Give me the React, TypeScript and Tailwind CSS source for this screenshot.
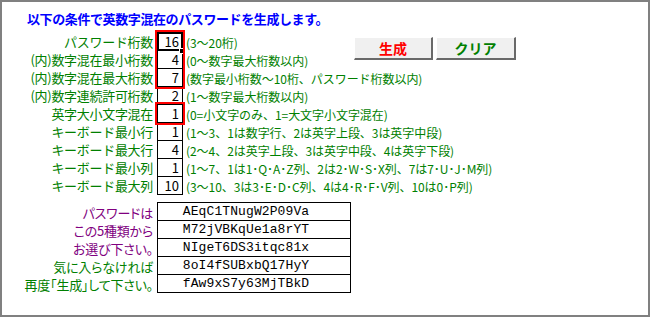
import React from 'react';

interface SettingRow {
  label: string;
  value: string;
  note: string;
}

const rows: SettingRow[] = [
  { label: 'パスワード桁数', value: '16', note: '(3〜20桁)' },
  { label: '(内)数字混在最小桁数', value: '4', note: '(0〜数字最大桁数以内)' },
  { label: '(内)数字混在最大桁数', value: '7', note: '(数字最小桁数〜10桁、パスワード桁数以内)' },
  { label: '(内)数字連続許可桁数', value: '2', note: '(1〜数字最大桁数以内)' },
  { label: '英字大小文字混在', value: '1', note: '(0=小文字のみ、1=大文字小文字混在)' },
  { label: 'キーボード最小行', value: '1', note: '(1〜3、1は数字行、2は英字上段、3は英字中段)' },
  { label: 'キーボード最大行', value: '4', note: '(2〜4、2は英字上段、3は英字中段、4は英字下段)' },
  { label: 'キーボード最小列', value: '1', note: '(1〜7、1は1･Q･A･Z列、2は2･W･S･X列、7は7･U･J･M列)' },
  { label: 'キーボード最大列', value: '10', note: '(3〜10、3は3･E･D･C列、4は4･R･F･V列、10は0･P列)' },
];

const results = [
  { hint: 'パスワードは', color: 'text-[#800080]', pw: 'AEqC1TNugW2P09Va' },
  { hint: 'この5種類から', color: 'text-[#800080]', pw: 'M72jVBKqUe1a8rYT' },
  { hint: 'お選び下さい。', color: 'text-[#800080]', pw: 'NIgeT6DS3itqc81x' },
  { hint: '気に入らなければ', color: 'text-[#008000]', pw: '8oI4fSUBxbQ17HyY' },
  { hint: '再度「生成」して下さい。', color: 'text-[#008000]', pw: 'fAw9xS7y63MjTBkD' },
];

const jp = "font-['Noto_Sans_CJK_JP',sans-serif]";

const App: React.FC = () => {
  return (
    <div className={`w-[650px] h-[317px] border-2 border-[#808080] bg-white overflow-hidden ${jp}`}>
      <h1 className="h-[30px] pl-[25px] pt-[9px] text-[13px] leading-[16px] font-bold tracking-[-0.4px] text-[#0000ff] whitespace-nowrap">
        以下の条件で英数字混在のパスワードを生成します。
      </h1>

      <div className="flex">
        <div className="w-[352px] shrink-0 flex">
          <div className="w-[151px] shrink-0 pt-px">
            {rows.map(r => (
              <div key={r.label} className="h-[18px] text-right text-[13px] leading-[18px] text-[#008000] whitespace-nowrap tracking-[-0.3px]">
                {r.label}
              </div>
            ))}
          </div>

          <div className="relative ml-[4px] w-[26px] shrink-0 border-t border-black">
            {rows.map(r => (
              <div key={r.label} className="h-[18px] border-x border-b border-black text-right pr-[3px] text-[13px] leading-[18px] text-black">
                {r.value}
              </div>
            ))}
            <div className="absolute left-0 top-[-1px] w-[26px] h-[19px] border-2 border-black" />
            <div className="absolute left-[23px] top-[16px] w-[4px] h-[4px] bg-black outline outline-1 outline-white" />
            <div className="absolute left-[-2px] top-[-3px] w-[30px] h-[59px] border-2 border-[#ff0000]" />
            <div className="absolute left-[-2px] top-[69px] w-[30px] h-[23px] border-2 border-[#ff0000]" />
          </div>

          <div className="ml-[3px] pt-px">
            {rows.map(r => (
              <div key={r.label} className="h-[18px] text-[12px] leading-[19px] text-[#008000] whitespace-nowrap tracking-[-0.05px]">
                {r.note}
              </div>
            ))}
          </div>
        </div>

        <div className="flex gap-[3px] pt-[5px] h-fit">
          <button className="w-[79px] h-[23px] bg-[#f0f0f0] border-t border-l border-white border-r-2 border-b-2 border-r-[#696969] border-b-[#696969] text-[14px] font-bold text-[#ff0000] leading-[18px]">
            生成
          </button>
          <button className="w-[80px] h-[23px] bg-[#f0f0f0] border-t border-l border-white border-r-2 border-b-2 border-r-[#696969] border-b-[#696969] text-[14px] font-bold text-[#008000] leading-[18px]">
            クリア
          </button>
        </div>
      </div>

      <div className="flex mt-[7px]">
        <div className="w-[151px] shrink-0 pt-px">
          {results.map(r => (
            <div key={r.pw} className={`h-[18px] text-right text-[13px] leading-[19px] whitespace-nowrap tracking-[-0.2px] [font-feature-settings:'palt'] ${r.color}`}>
              {r.hint}
            </div>
          ))}
        </div>
        <div className="ml-[4px] w-[194px] border-t border-black">
          {results.map(r => (
            <div key={r.pw} className="h-[18px] border-x border-b border-black text-center pr-[16px] font-['Liberation_Mono',monospace] text-[13px] leading-[18px] tracking-[0.1px] text-black">
              {r.pw}
            </div>
          ))}
        </div>
      </div>
    </div>
  );
};

export default App;
